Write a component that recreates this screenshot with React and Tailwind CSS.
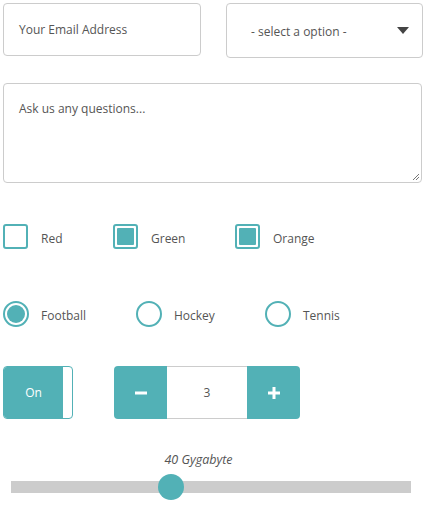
import React from "react";

export default function App() {
  return (
    <div className="w-[425px] h-[507px] bg-white text-[12px] text-[#555] overflow-hidden" style={{ fontFamily: '"Open Sans", sans-serif' }}>
      <div className="flex pt-[3px] pl-[3px]">
        <div className="w-[198px] h-[53px] border border-[#ccc] rounded-[4px] flex items-center pl-[15px]">
          Your Email Address
        </div>
        <div className="ml-[25px] w-[197px] h-[55px] border border-[#ccc] rounded-[4px] flex items-center pl-[24px] pr-[13px]">
          <span className="flex-1 pt-[2px]">- select a option -</span>
          <svg width="12" height="7" viewBox="0 0 12 7"><path d="M0 0h12L6 7z" fill="#444" /></svg>
        </div>
      </div>
      <div className="ml-[3px] mt-[25px] w-[419px] h-[100px] border border-[#ccc] rounded-[4px] pl-[15px] pt-[16px] relative">
        Ask us any questions...
        <svg className="absolute right-[2px] bottom-[2px]" width="7" height="7" viewBox="0 0 7 7">
          <path d="M1 7L7 1M4 7L7 4" stroke="#777" strokeWidth="1" />
        </svg>
      </div>
      <div className="flex items-center mt-[41px] pl-[3px] h-[25px]">
        <div className="w-[25px] h-[25px] border-2 border-[#52b1b6] rounded-[3px]" />
        <span className="ml-[13px] w-[72px] pt-[4px]">Red</span>
        <div className="w-[25px] h-[25px] border-2 border-[#52b1b6] rounded-[3px] p-[2px]"><div className="w-full h-full bg-[#52b1b6] rounded-[1px]" /></div>
        <span className="ml-[13px] w-[84px] pt-[4px]">Green</span>
        <div className="w-[25px] h-[25px] border-2 border-[#52b1b6] rounded-[3px] p-[2px]"><div className="w-full h-full bg-[#52b1b6] rounded-[1px]" /></div>
        <span className="ml-[13px] pt-[4px]">Orange</span>
      </div>
      <div className="flex items-center mt-[52px] pl-[3px] h-[26px]">
        <div className="w-[26px] h-[26px] border-2 border-[#52b1b6] rounded-full p-[2px]"><div className="w-full h-full bg-[#52b1b6] rounded-full" /></div>
        <span className="ml-[12px] w-[95px] pt-[4px]">Football</span>
        <div className="w-[26px] h-[26px] border-2 border-[#52b1b6] rounded-full" />
        <span className="ml-[12px] w-[91px] pt-[4px]">Hockey</span>
        <div className="w-[26px] h-[26px] border-2 border-[#52b1b6] rounded-full" />
        <span className="ml-[12px] pt-[4px]">Tennis</span>
      </div>
      <div className="flex mt-[39px] pl-[3px]">
        <div className="w-[70px] h-[53px] border border-[#52b1b6] rounded-[4px] bg-white flex overflow-hidden">
          <div className="w-[59px] h-full bg-[#52b1b6] text-white flex items-center justify-center">On</div>
        </div>
        <div className="ml-[41px] flex h-[53px]">
          <div className="w-[53px] h-full bg-[#52b1b6] rounded-l-[4px] flex items-center justify-center">
            <svg width="12" height="4" viewBox="0 0 12 4"><rect width="12" height="3" y="0.5" fill="#fff" /></svg>
          </div>
          <div className="w-[80px] h-full border-y border-[#ccc] flex items-center justify-center">3</div>
          <div className="w-[53px] h-full bg-[#52b1b6] rounded-r-[4px] flex items-center justify-center">
            <svg width="12" height="12" viewBox="0 0 12 12"><path d="M4.5 0h3v4.5H12v3H7.5V12h-3V7.5H0v-3h4.5z" fill="#fff" /></svg>
          </div>
        </div>
      </div>
      <div className="mt-[31px] text-center italic text-[12.5px] w-[397px] h-[19px] leading-[19px]">40 Gygabyte</div>
      <div className="ml-[11px] mt-[12px] w-[400px] h-[12px] bg-[#ccc] relative">
        <div className="absolute left-[147px] top-[-7px] w-[26px] h-[26px] rounded-full bg-[#52b1b6]" />
      </div>
    </div>
  );
}
